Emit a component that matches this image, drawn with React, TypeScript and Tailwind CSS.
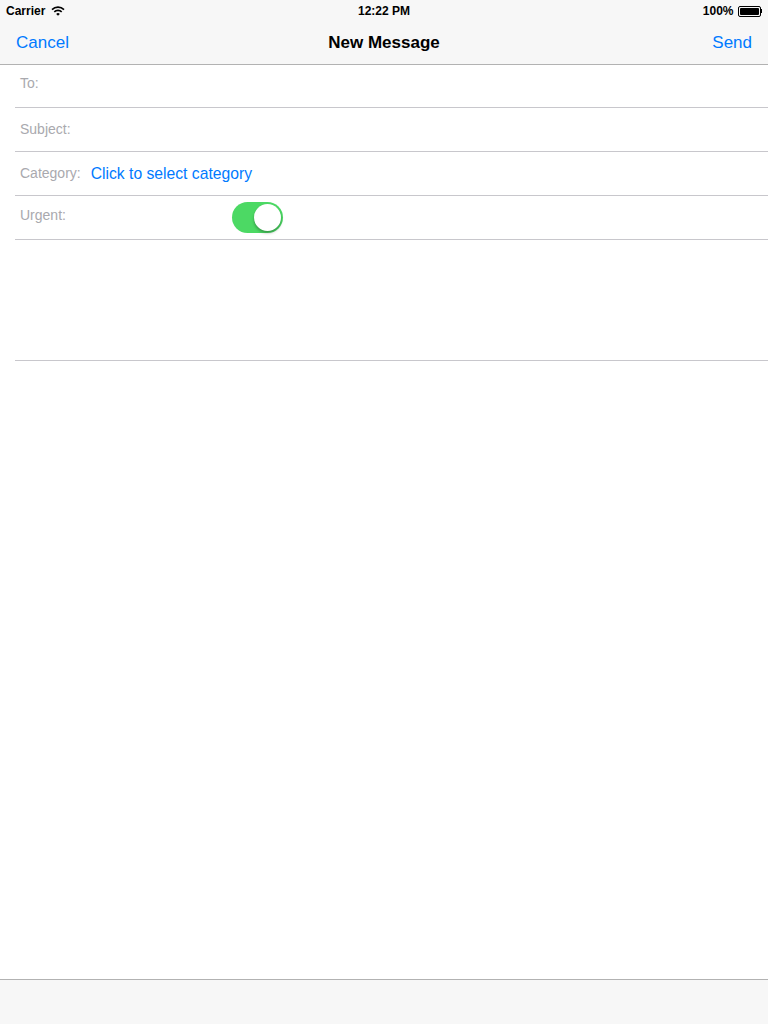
import { useState } from 'react';

const font = { fontFamily: '"Liberation Sans", Arial, sans-serif' };

const Row = ({ label, children, h = 'h-[44px]', pad = 'pb-0' }: { label: string; children?: React.ReactNode; h?: string; pad?: string }) => (
  <div className={`ml-[15px] ${h} border-b border-[#c8c7cc] flex items-center pl-[5px] ${pad}`}>
    <span className="text-[14px] text-[#a9a9ae]">{label}</span>
    {children}
  </div>
);

const App = () => {
  const [urgent, setUrgent] = useState(true);

  return (
    <div className="w-[768px] h-[1024px] bg-white flex flex-col" style={font}>
      {/* Status + nav bar */}
      <div className="bg-[#f7f7f7] border-b border-[#b2b2b2]">
        <div className="h-[20px] relative flex items-center justify-between px-[6px] pt-[2px] text-[12px] text-black">
          <div className="flex items-center gap-[6px] font-bold">
            <span>Carrier</span>
            <svg width="14" height="10" viewBox="0 0 14 10">
              <path d="M1 3.6 A8.5 8.5 0 0 1 13 3.6" stroke="#000" strokeWidth="1.6" fill="none" />
              <path d="M3.3 5.9 A5.2 5.2 0 0 1 10.7 5.9" stroke="#000" strokeWidth="1.6" fill="none" />
              <path d="M5.2 8 L7 9.8 L8.8 8 A2.5 2.5 0 0 0 5.2 8 Z" fill="#000" />
            </svg>
          </div>
          <span className="absolute left-1/2 -translate-x-1/2 font-bold">12:22 PM</span>
          <div className="flex items-center gap-[4px] font-bold">
            <span>100%</span>
            <div className="flex items-center">
              <div className="w-[23px] h-[11px] border border-black rounded-[2px] p-[1px]">
                <div className="w-full h-full bg-black rounded-[1px]" />
              </div>
              <div className="w-[1.5px] h-[4px] bg-black" />
            </div>
          </div>
        </div>
        <div className="h-[44px] relative flex items-center justify-between px-[16px] pt-[2px] text-[17px]">
          <button className="text-[#007aff]">Cancel</button>
          <span className="absolute left-1/2 -translate-x-1/2 font-bold text-black">New Message</span>
          <button className="text-[#007aff]">Send</button>
        </div>
      </div>

      {/* Fields */}
      <Row label="To:" h="h-[43px]" pad="pb-[6px]" />
      <Row label="Subject:" />
      <Row label="Category:">
        <span className="ml-[10px] text-[15.7px] text-[#007aff]">Click to select category</span>
      </Row>
      <div className="ml-[15px] h-[44px] border-b border-[#c8c7cc] flex items-center pl-[5px]">
        <span className="text-[14px] text-[#a9a9ae] w-[212px] pb-[5px]">Urgent:</span>
        <button
          onClick={() => setUrgent(!urgent)}
          className={`w-[51px] h-[31px] rounded-full p-[2px] flex ${urgent ? 'bg-[#4cd964] justify-end' : 'bg-[#e5e5ea] justify-start'}`}
        >
          <span className="w-[27px] h-[27px] rounded-full bg-white shadow-[0_2px_3px_rgba(0,0,0,0.3)]" />
        </button>
      </div>

      {/* Body */}
      <div className="ml-[15px] h-[121px] border-b border-[#c8c7cc]" />

      <div className="flex-1" />

      {/* Toolbar */}
      <div className="h-[45px] bg-[#f7f7f7] border-t border-[#b2b2b2]" />
    </div>
  );
};

export default App;
